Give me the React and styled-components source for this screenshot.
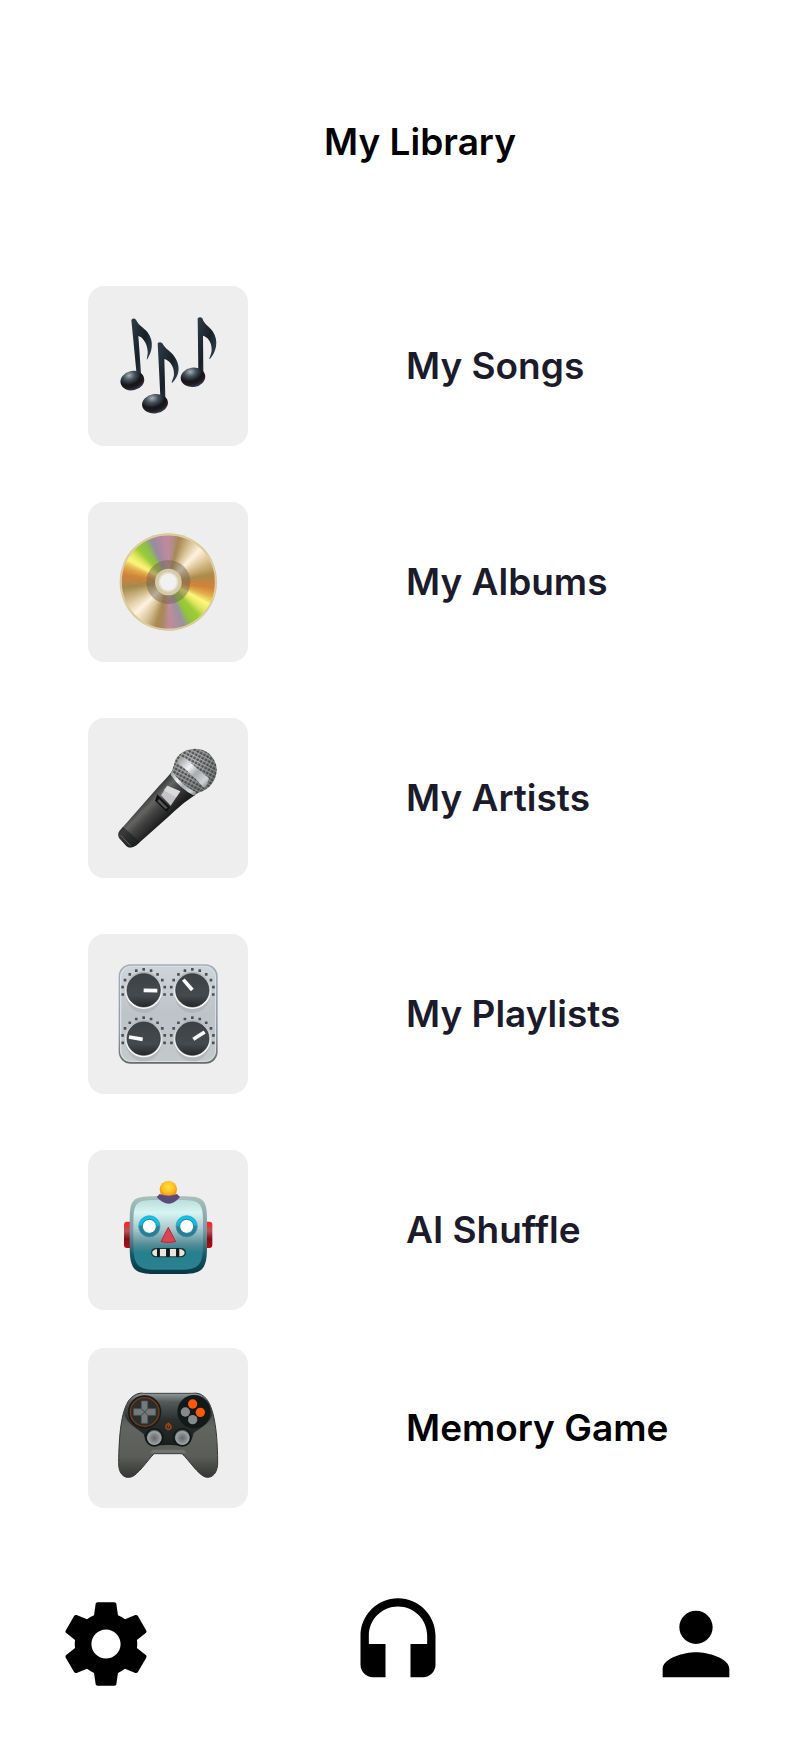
import React from "react";
import styled, { createGlobalStyle } from "styled-components";

const GlobalStyle = createGlobalStyle`
  * { box-sizing: border-box; }
  body {
    margin: 0;
    background: #ffffff;
    color: #000000;
    font-family: Inter, "Liberation Sans", sans-serif;
  }
`;

const Screen = styled.div`
  display: flex;
  flex-direction: column;
  padding: 116px 0 54px;
`;

const Title = styled.h1`
  margin: 0;
  padding-left: 36px;
  font-size: 37px;
  font-weight: 600;
  line-height: 52px;
  text-align: center;
`;

const Library = styled.ul`
  display: flex;
  flex-direction: column;
  margin: 118px 0 0;
  padding: 0 40px 0 88px;
  list-style: none;
`;

const Item = styled.li`
  margin-top: ${(p) => (p.$close ? 38 : 56)}px;

  &:first-child {
    margin-top: 0;
  }
`;

const ItemLink = styled.a`
  display: grid;
  grid-template-columns: 160px 1fr;
  column-gap: 158px;
  align-items: center;
  color: ${(p) => (p.$black ? "#000000" : "#1b1b2b")};
  font-size: 37px;
  font-weight: 600;
  line-height: 52px;
  text-decoration: none;
`;

const Tile = styled.span`
  display: block;
  height: 160px;
  border-radius: 16px;
  background: #eeeeee;
`;

const Drawing = styled.svg`
  display: block;
  width: 160px;
  height: 160px;
`;

const TabBar = styled.nav`
  display: grid;
  grid-template-columns: 292fr 298fr 100px;
  margin-top: 86px;
  padding: 0 58px 0 56px;
`;

const TabButton = styled.button`
  width: 100px;
  height: 100px;
  padding: 0;
  border: 0;
  background: none;
  color: inherit;
  cursor: pointer;
`;

const TabIcon = styled.svg`
  display: block;
  width: 100px;
  height: 100px;
  fill: currentColor;
`;

function Art({ children }) {
  return (
    <Drawing viewBox="24 18 480 480" aria-hidden="true">
      {children}
    </Drawing>
  );
}

function Notes() {
  return (
    <Art>
      <defs>
        <radialGradient id="noteHead" cx="0.42" cy="0.2" r="0.8">
          <stop offset="0" stopColor="#a5afb5" />
          <stop offset="0.3" stopColor="#46525b" />
          <stop offset="0.62" stopColor="#11161c" />
          <stop offset="0.82" stopColor="#29191c" />
          <stop offset="1" stopColor="#2c455a" />
        </radialGradient>
        <linearGradient id="noteFlag" x1="0" y1="0" x2="1" y2="1">
          <stop offset="0" stopColor="#303e49" />
          <stop offset="0.5" stopColor="#182027" />
          <stop offset="1" stopColor="#3c5261" />
        </linearGradient>
      </defs>
      <g fill="url(#noteFlag)">
        <path d="M154 120q6-8 14-1c8 18 22 22 34 37 23 29 13 62-1 83-2-3 3-12 2-25-2-28-18-44-28-46l8 112-14-6z" />
        <path d="M233 190q6-7 14 0c9 18 25 23 37 41 22 33 10 61-8 78-3-3 5-12 6-26 1-28-17-43-29-46l3 115-15-4z" />
        <path d="M353 115q7-7 14 0c6 19 20 24 31 39 20 29 10 64-9 84-3-3 5-13 6-27 1-28-15-41-26-44l1 108-15-3z" />
      </g>
      <ellipse cx="157" cy="302" rx="36" ry="29" transform="rotate(-13 157 302)" fill="url(#noteHead)" />
      <ellipse cx="225" cy="371" rx="39" ry="29" transform="rotate(-8 225 371)" fill="url(#noteHead)" />
      <ellipse cx="339" cy="292" rx="37" ry="29" transform="rotate(-8 339 292)" fill="url(#noteHead)" />
    </Art>
  );
}

const DISC_STOPS = [
  [0, 190, 139, 155], [8, 176, 140, 125], [14, 165, 135, 82], [28, 214, 190, 145],
  [44, 255, 244, 224], [58, 224, 201, 155], [80, 171, 138, 72], [97, 211, 130, 58],
  [108, 225, 175, 75], [118, 253, 248, 125], [128, 225, 230, 95], [138, 154, 205, 55],
  [150, 145, 198, 55], [160, 153, 146, 160], [178, 192, 140, 155], [188, 170, 135, 95],
  [195, 168, 138, 80], [210, 220, 198, 155], [226, 255, 244, 224], [242, 222, 198, 155],
  [262, 164, 138, 78], [279, 211, 130, 58], [290, 225, 175, 75], [299, 253, 248, 125],
  [308, 225, 230, 95], [317, 154, 205, 55], [328, 145, 190, 75], [338, 150, 140, 160],
  [350, 181, 136, 160], [360, 190, 139, 155],
];

function discColor(angle) {
  const next = Math.max(1, DISC_STOPS.findIndex((s) => s[0] >= angle));
  const a = DISC_STOPS[next - 1];
  const b = DISC_STOPS[next];
  const t = (angle - a[0]) / (b[0] - a[0]);
  const mix = [1, 2, 3].map((i) => Math.round(a[i] + (b[i] - a[i]) * t));
  return `rgb(${mix.join(",")})`;
}

function Disc() {
  const point = (deg) => {
    const r = (deg * Math.PI) / 180;
    return `${265 + 143 * Math.sin(r)} ${258 - 143 * Math.cos(r)}`;
  };
  return (
    <Art>
      <circle cx="265" cy="258" r="146" fill="#d5c68f" />
      {Array.from({ length: 120 }, (_, i) => (
        <path
          key={i}
          d={`M265 258L${point(i * 3)}A143 143 0 0 1 ${point(i * 3 + 4)}Z`}
          fill={discColor(i * 3 + 1)}
        />
      ))}
      <circle cx="265" cy="258" r="142" fill="none" stroke="#ddcea0" strokeWidth="5" />
      <circle cx="265" cy="258" r="66" fill="#6e6250" fillOpacity="0.48" />
      <circle cx="265" cy="258" r="40" fill="#d5cbaa" />
      <circle cx="265" cy="258" r="30" fill="#e5dfcc" />
      <circle cx="265" cy="258" r="25" fill="#f1f1f1" />
    </Art>
  );
}

function Microphone() {
  return (
    <Art>
      <defs>
        <linearGradient id="micBody" gradientUnits="userSpaceOnUse" x1="190" y1="265" x2="250" y2="325">
          <stop offset="0" stopColor="#333533" />
          <stop offset="0.28" stopColor="#636563" />
          <stop offset="0.55" stopColor="#444343" />
          <stop offset="1" stopColor="#1d1e1e" />
        </linearGradient>
        <linearGradient id="micBand" x1="0" y1="0" x2="1" y2="1">
          <stop offset="0" stopColor="#929292" />
          <stop offset="0.35" stopColor="#f0f2f5" />
          <stop offset="0.55" stopColor="#a8acae" />
          <stop offset="0.8" stopColor="#d1d4d5" />
          <stop offset="1" stopColor="#777" />
        </linearGradient>
        <radialGradient id="micHead" cx="0.4" cy="0.3" r="0.7">
          <stop offset="0" stopColor="#c5c7c8" />
          <stop offset="1" stopColor="#777b7b" />
        </radialGradient>
        <pattern id="micMesh" width="11" height="11" patternUnits="userSpaceOnUse" patternTransform="rotate(28)">
          <rect x="1" y="1" width="8" height="7" fill="#333" fillOpacity="0.8" />
        </pattern>
      </defs>
      <path d="M277 177L347 248C312 270 291 290 267 313L169 400Q151 412 139 402L118 379Q111 367 119 356L237 222Q265 193 277 177Z" fill="url(#micBody)" />
      <path d="M119 356Q111 367 118 379L139 402Q151 412 169 400L180 390L129 344Z" fill="#181a19" fillOpacity="0.55" />
      <path d="M122 370L151 401" stroke="#646664" strokeWidth="3" />
      <path d="M287 142C299 121 322 110 346 110C382 110 409 138 410 173C410 204 389 231 360 240L347 247Q303 226 275 181Z" fill="url(#micHead)" />
      <path d="M287 142C299 121 322 110 346 110C382 110 409 138 410 173C410 204 389 231 360 240L347 247Q303 226 275 181Z" fill="url(#micMesh)" />
      <path d="M303 136L317 139Q350 170 387 199L381 217L372 228Q342 192 294 153L293 145Z" fill="url(#micBand)" />
      <path d="M276 176Q300 217 348 241L343 251Q302 232 272 188Z" fill="url(#micBand)" />
      <path d="M232 247L270 286L260 300L225 266Z" fill="#111213" />
      <path d="M237 261L263 287L257 291L232 268Z" fill="#535454" />
      <path d="M262 221L301 238L272 281L243 250Z" fill="#c4c2c4" />
      <path d="M262 221L301 238L289 256L251 235Z" fill="#e3e1e4" fillOpacity="0.7" />
    </Art>
  );
}

const KNOBS = [
  { cx: 191, cy: 187, hand: "M191 187L232 188" },
  { cx: 337, cy: 187, hand: "M310 155L337 186" },
  { cx: 191, cy: 332, hand: "M147 327L188 334" },
  { cx: 337, cy: 332, hand: "M340 334L374 312" },
];

function Mixer() {
  return (
    <Art>
      <defs>
        <linearGradient id="panel" x1="0" y1="0" x2="0" y2="1">
          <stop offset="0" stopColor="#ced5da" />
          <stop offset="0.5" stopColor="#bdc3c8" />
          <stop offset="1" stopColor="#c4c9cb" />
        </linearGradient>
        <linearGradient id="panelEdge" x1="0" y1="0" x2="0" y2="1">
          <stop offset="0" stopColor="#a2adbd" />
          <stop offset="0.7" stopColor="#9499a0" />
          <stop offset="1" stopColor="#686968" />
        </linearGradient>
        <linearGradient id="knobRing" x1="0" y1="0" x2="0" y2="1">
          <stop offset="0" stopColor="#a9afb3" />
          <stop offset="0.6" stopColor="#efefed" />
          <stop offset="1" stopColor="#faf9f5" />
        </linearGradient>
        <linearGradient id="knob" x1="0" y1="0" x2="0" y2="1">
          <stop offset="0" stopColor="#3c4146" />
          <stop offset="0.65" stopColor="#454a4e" />
          <stop offset="1" stopColor="#24282b" />
        </linearGradient>
      </defs>
      <rect x="116" y="109" width="297" height="298" rx="36" fill="url(#panelEdge)" />
      <rect x="120" y="113" width="288" height="289" rx="33" fill="#d9dfe2" />
      <rect x="124" y="117" width="281" height="282" rx="30" fill="url(#panel)" />
      {KNOBS.map(({ cx, cy, hand }) => (
        <g key={hand}>
          <ellipse cx={cx} cy={cy + 13} rx="53" ry="55" fill="#8d969e" fillOpacity="0.3" />
          <circle cx={cx} cy={cy} r="56" fill="url(#knobRing)" />
          <circle cx={cx} cy={cy} r="50" fill="url(#knob)" stroke="#292d30" strokeWidth="2" />
          <path d={hand} stroke="#fafafa" strokeWidth="11" />
          {Array.from({ length: 11 }, (_, i) => {
            const a = ((i - 5) * 20.3 * Math.PI) / 180;
            return (
              <rect
                key={i}
                x={cx + 64 * Math.sin(a) - 4}
                y={cy - 63 * Math.cos(a) - 4}
                width="8"
                height="8"
                rx="1"
                fill="#4a5057"
              />
            );
          })}
        </g>
      ))}
    </Art>
  );
}

function Robot() {
  return (
    <Art>
      <defs>
        <linearGradient id="robotFace" x1="0" y1="0" x2="0" y2="1">
          <stop offset="0" stopColor="#b8dfdc" />
          <stop offset="0.18" stopColor="#d8f5f1" />
          <stop offset="0.42" stopColor="#a7c7cb" />
          <stop offset="0.66" stopColor="#4d8792" />
          <stop offset="0.76" stopColor="#25808d" />
          <stop offset="1" stopColor="#2b8190" />
        </linearGradient>
        <linearGradient id="robotRim" x1="0" y1="0" x2="0" y2="1">
          <stop offset="0" stopColor="#a9c0bd" />
          <stop offset="0.45" stopColor="#7899a1" />
          <stop offset="0.75" stopColor="#165866" />
          <stop offset="1" stopColor="#073744" />
        </linearGradient>
        <linearGradient id="robotEar" x1="0" y1="0" x2="0" y2="1">
          <stop offset="0" stopColor="#ff1c28" />
          <stop offset="0.35" stopColor="#b95358" />
          <stop offset="0.65" stopColor="#821018" />
          <stop offset="1" stopColor="#b90813" />
        </linearGradient>
        <linearGradient id="robotEye" x1="0" y1="0" x2="0" y2="1">
          <stop offset="0" stopColor="#00c8f1" />
          <stop offset="0.42" stopColor="#12bee0" />
          <stop offset="0.53" stopColor="#2b849a" />
          <stop offset="1" stopColor="#277c90" />
        </linearGradient>
        <radialGradient id="robotLamp" cx="0.5" cy="0.35" r="0.65">
          <stop offset="0" stopColor="#ffe33c" />
          <stop offset="0.55" stopColor="#ffbd21" />
          <stop offset="1" stopColor="#ed7c0c" />
        </radialGradient>
      </defs>
      <rect x="132" y="233" width="28" height="79" rx="9" fill="url(#robotEar)" />
      <rect x="370" y="233" width="27" height="79" rx="9" fill="url(#robotEar)" />
      <path d="M149 235C149 168 155 157 222 157H307C373 157 381 166 381 235V308C381 376 367 390 306 390H222C162 390 149 374 149 308Z" fill="url(#robotRim)" />
      <path d="M160 238C160 177 168 168 225 168H304C361 168 369 178 369 238V305C369 362 354 377 302 377H226C174 377 160 361 160 305Z" fill="url(#robotFace)" />
      <circle cx="265" cy="136" r="26" fill="url(#robotLamp)" />
      <path d="M230 159L239 150Q265 160 291 150L300 159Q267 199 230 159Z" fill="#5c4a7c" />
      <circle cx="208" cy="247" r="32" fill="url(#robotEye)" stroke="#4296ad" strokeWidth="2" />
      <circle cx="320" cy="247" r="32" fill="url(#robotEye)" stroke="#4296ad" strokeWidth="2" />
      <circle cx="208" cy="247" r="21" fill="#fff" stroke="#238094" strokeWidth="3" />
      <circle cx="320" cy="247" r="21" fill="#fff" stroke="#238094" strokeWidth="3" />
      <path d="M265 250L287 293Q265 298 243 293Z" fill="#dc4453" stroke="#ad2d3b" strokeWidth="3" strokeLinejoin="round" />
      <rect x="213" y="312" width="105" height="28" rx="14" fill="#173a3f" />
      <path d="M232 315V337C212 336 211 317 232 315ZM240 315H258V337H240ZM270 315H288V337H270ZM298 315C319 317 319 336 298 337Z" fill="#e8e6dc" />
      <path d="M231 313h7v26h-7zM259 313h9v26h-9zM289 313h8v26h-8z" fill="#11171a" />
    </Art>
  );
}

function Gamepad() {
  return (
    <Art>
      <defs>
        <linearGradient id="padGrip" x1="0" y1="0" x2="0" y2="1">
          <stop offset="0" stopColor="#383b39" />
          <stop offset="0.4" stopColor="#62645f" />
          <stop offset="0.75" stopColor="#5b5d58" />
          <stop offset="1" stopColor="#343632" />
        </linearGradient>
        <linearGradient id="padTop" x1="0" y1="0" x2="0" y2="1">
          <stop offset="0" stopColor="#909997" />
          <stop offset="0.16" stopColor="#525b59" />
          <stop offset="0.5" stopColor="#2b302f" />
          <stop offset="1" stopColor="#191e1d" />
        </linearGradient>
        <radialGradient id="padStick" cx="0.5" cy="0.55" r="0.5">
          <stop offset="0" stopColor="#646b6c" />
          <stop offset="0.6" stopColor="#898e8f" />
          <stop offset="0.85" stopColor="#a1a5a5" />
          <stop offset="1" stopColor="#555b5b" />
        </radialGradient>
      </defs>
      <path d="M148 173Q170 149 193 154H335Q363 149 381 173C405 207 412 280 413 354C415 393 397 410 376 405C354 398 327 354 306 335H222C202 356 173 400 153 405C129 411 115 391 116 362C117 280 123 208 148 173Z" fill="url(#padGrip)" stroke="#343632" strokeWidth="3" />
      <path d="M148 173Q170 153 193 155H335Q363 151 381 173Q396 193 397 218C389 244 363 257 341 273C335 300 327 309 308 311C289 311 277 309 266 309C252 309 240 311 222 310C202 307 195 297 191 276C168 257 144 248 134 220Q134 193 148 173Z" fill="url(#padTop)" />
      <path d="M217 323H312L319 334H210Z" fill="#898e89" fillOpacity="0.45" />
      <circle cx="194" cy="210" r="50" fill="#171c1b" />
      <circle cx="194" cy="210" r="43" fill="#292e2d" stroke="#7d3b17" strokeWidth="4" />
      <path d="M184 177H203V200H227V220H203V244H184V220H161V200H184Z" fill="#747979" stroke="#515857" strokeWidth="2" strokeLinejoin="round" />
      <path d="M184 200L194 210L203 200M184 220L194 210L203 220" fill="none" stroke="#424948" strokeWidth="3" />
      <circle cx="342" cy="209" r="50" fill="#131918" />
      <circle cx="316" cy="210" r="14" fill="#858a8a" />
      <circle cx="338" cy="233" r="14" fill="#858a8a" />
      <circle cx="338" cy="186" r="14" fill="#ff5806" />
      <circle cx="361" cy="211" r="14" fill="#ff5806" />
      <path d="M265 244Q256 250 258 258Q266 267 273 258Q274 250 265 244Z" fill="none" stroke="#aa4815" strokeWidth="4" />
      <path d="M265 249V257" stroke="#b84b12" strokeWidth="3" />
      <circle cx="223" cy="286" r="28" fill="#111716" />
      <circle cx="307" cy="286" r="28" fill="#111716" />
      <circle cx="223" cy="286" r="23" fill="url(#padStick)" />
      <circle cx="307" cy="286" r="23" fill="url(#padStick)" />
    </Art>
  );
}

const ITEMS = [
  { label: "My Songs", href: "#songs", Icon: Notes },
  { label: "My Albums", href: "#albums", Icon: Disc },
  { label: "My Artists", href: "#artists", Icon: Microphone },
  { label: "My Playlists", href: "#playlists", Icon: Mixer },
  { label: "AI Shuffle", href: "#shuffle", Icon: Robot },
  { label: "Memory Game", href: "#game", Icon: Gamepad, last: true },
];

const TABS = [
  {
    label: "Settings",
    path: "M19.43 12.98c.04-.32.07-.64.07-.98s-.03-.66-.07-.98l2.11-1.65c.19-.15.24-.42.12-.64l-2-3.46c-.12-.22-.39-.3-.61-.22l-2.49 1c-.52-.4-1.08-.73-1.69-.98l-.38-2.65C14.46 2.18 14.25 2 14 2h-4c-.25 0-.46.18-.49.42l-.38 2.65c-.61.25-1.17.59-1.69.98l-2.49-1c-.23-.09-.49 0-.61.22l-2 3.46c-.13.22-.07.49.12.64l2.11 1.65c-.04.32-.07.65-.07.98s.03.66.07.98l-2.11 1.65c-.19.15-.24.42-.12.64l2 3.46c.12.22.39.3.61.22l2.49-1c.52.4 1.08.73 1.69.98l.38 2.65c.03.24.24.42.49.42h4c.25 0 .46-.18.49-.42l.38-2.65c.61-.25 1.17-.59 1.69-.98l2.49 1c.23.09.49 0 .61-.22l2-3.46c.12-.22.07-.49-.12-.64l-2.11-1.65zM12 15.5c-1.93 0-3.5-1.57-3.5-3.5s1.57-3.5 3.5-3.5 3.5 1.57 3.5 3.5-1.57 3.5-3.5 3.5z",
  },
  {
    label: "Listen",
    path: "M12 1c-4.97 0-9 4.03-9 9v7c0 1.66 1.34 3 3 3h3v-8H5v-2c0-3.87 3.13-7 7-7s7 3.13 7 7v2h-4v8h3c1.66 0 3-1.34 3-3v-7c0-4.97-4.03-9-9-9z",
  },
  {
    label: "Profile",
    path: "M12 12c2.21 0 4-1.79 4-4s-1.79-4-4-4-4 1.79-4 4 1.79 4 4 4zm0 2c-2.67 0-8 1.34-8 4v2h16v-2c0-2.66-5.33-4-8-4z",
  },
];

export default function App() {
  return (
    <>
      <GlobalStyle />
      <Screen>
        <Title>My Library</Title>
        <Library>
          {ITEMS.map(({ label, href, Icon, last }) => (
            <Item key={label} $close={last}>
              <ItemLink href={href} $black={last}>
                <Tile>
                  <Icon />
                </Tile>
                <span>{label}</span>
              </ItemLink>
            </Item>
          ))}
        </Library>
        <TabBar>
          {TABS.map(({ label, path }) => (
            <TabButton key={label} type="button" aria-label={label}>
              <TabIcon viewBox="0 0 24 24" aria-hidden="true">
                <path d={path} />
              </TabIcon>
            </TabButton>
          ))}
        </TabBar>
      </Screen>
    </>
  );
}
